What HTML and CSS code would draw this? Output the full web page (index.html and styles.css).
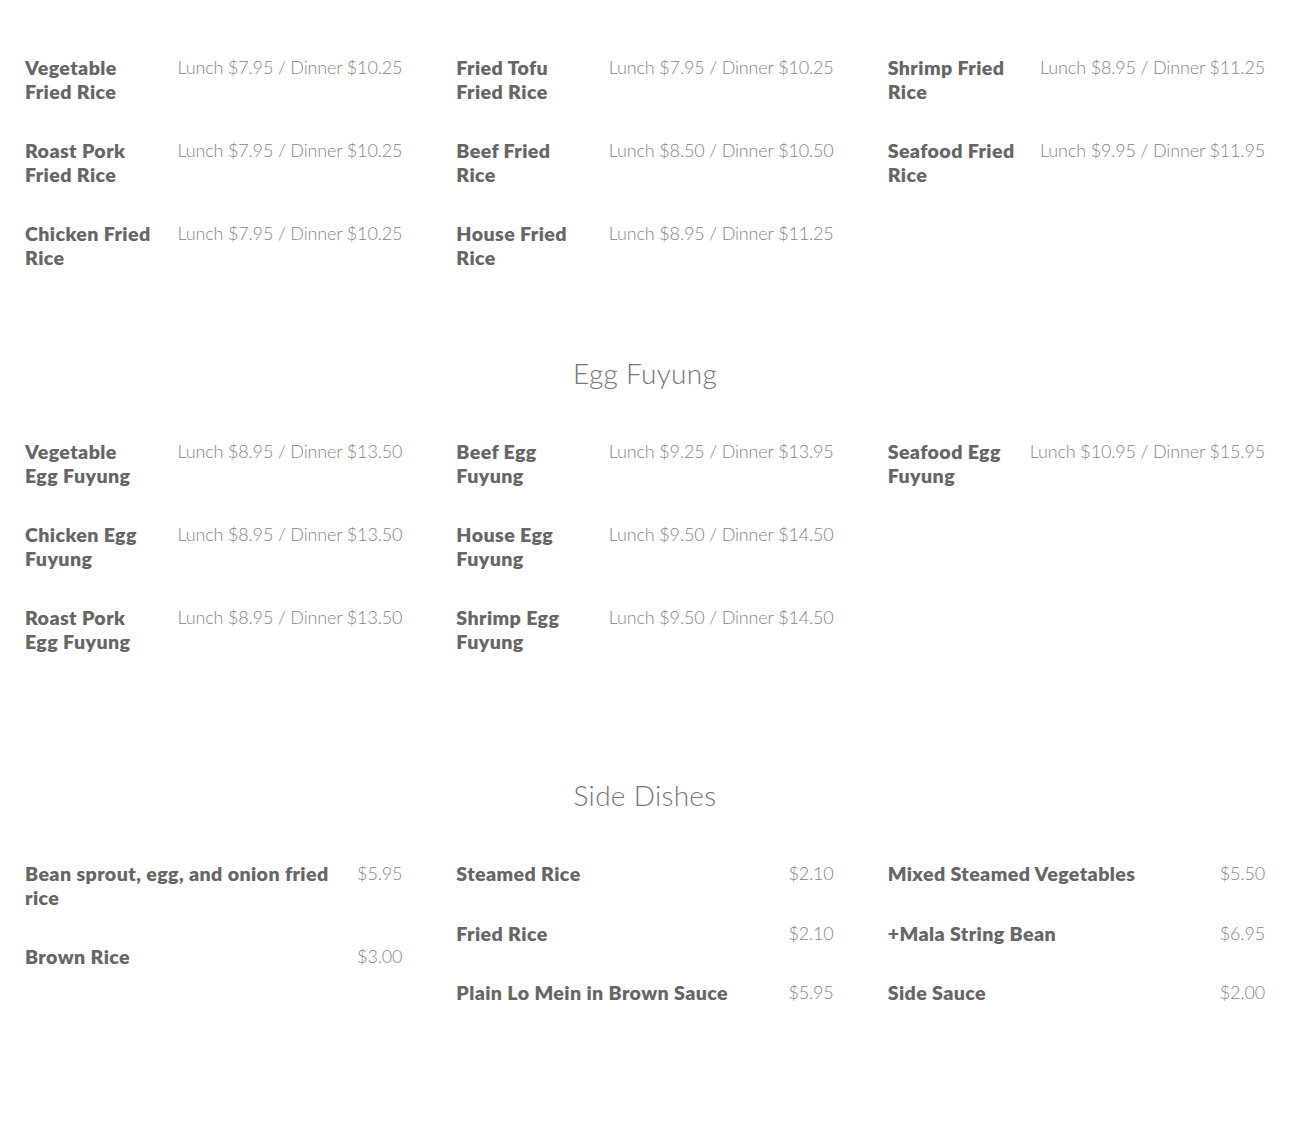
FILE: index.html
```html
<!DOCTYPE html>
<html lang="en">
<head>
<meta charset="utf-8">
<title>Menu</title>
<link rel="stylesheet" href="styles.css">
</head>
<body>
<main class="menu">
  <section class="section section--first">
    <h2 class="section-title">Fried Rice</h2>
    <div class="columns">
      <div class="column">
        <div class="item"><div class="item-name">Vegetable Fried Rice</div><div class="item-price">Lunch $7.95 / Dinner $10.25</div></div>
        <div class="item"><div class="item-name">Roast Pork Fried Rice</div><div class="item-price">Lunch $7.95 / Dinner $10.25</div></div>
        <div class="item"><div class="item-name">Chicken Fried Rice</div><div class="item-price">Lunch $7.95 / Dinner $10.25</div></div>
      </div>
      <div class="column">
        <div class="item"><div class="item-name">Fried Tofu Fried Rice</div><div class="item-price">Lunch $7.95 / Dinner $10.25</div></div>
        <div class="item"><div class="item-name">Beef Fried Rice</div><div class="item-price">Lunch $8.50 / Dinner $10.50</div></div>
        <div class="item"><div class="item-name">House Fried Rice</div><div class="item-price">Lunch $8.95 / Dinner $11.25</div></div>
      </div>
      <div class="column">
        <div class="item"><div class="item-name">Shrimp Fried Rice</div><div class="item-price">Lunch $8.95 / Dinner $11.25</div></div>
        <div class="item"><div class="item-name">Seafood Fried Rice</div><div class="item-price">Lunch $9.95 / Dinner $11.95</div></div>
      </div>
    </div>
  </section>

  <section class="section">
    <h2 class="section-title">Egg Fuyung</h2>
    <div class="columns">
      <div class="column">
        <div class="item"><div class="item-name">Vegetable Egg Fuyung</div><div class="item-price">Lunch $8.95 / Dinner $13.50</div></div>
        <div class="item"><div class="item-name">Chicken Egg Fuyung</div><div class="item-price">Lunch $8.95 / Dinner $13.50</div></div>
        <div class="item"><div class="item-name">Roast Pork Egg Fuyung</div><div class="item-price">Lunch $8.95 / Dinner $13.50</div></div>
      </div>
      <div class="column">
        <div class="item"><div class="item-name">Beef Egg Fuyung</div><div class="item-price">Lunch $9.25 / Dinner $13.95</div></div>
        <div class="item"><div class="item-name">House Egg Fuyung</div><div class="item-price">Lunch $9.50 / Dinner $14.50</div></div>
        <div class="item"><div class="item-name">Shrimp Egg Fuyung</div><div class="item-price">Lunch $9.50 / Dinner $14.50</div></div>
      </div>
      <div class="column">
        <div class="item"><div class="item-name">Seafood Egg Fuyung</div><div class="item-price">Lunch $10.95 / Dinner $15.95</div></div>
      </div>
    </div>
  </section>

  <section class="section">
    <h2 class="section-title">Side Dishes</h2>
    <div class="columns">
      <div class="column">
        <div class="item"><div class="item-name">Bean sprout, egg, and onion fried rice</div><div class="item-price">$5.95</div></div>
        <div class="item"><div class="item-name">Brown Rice</div><div class="item-price">$3.00</div></div>
      </div>
      <div class="column">
        <div class="item"><div class="item-name">Steamed Rice</div><div class="item-price">$2.10</div></div>
        <div class="item"><div class="item-name">Fried Rice</div><div class="item-price">$2.10</div></div>
        <div class="item"><div class="item-name">Plain Lo Mein in Brown Sauce</div><div class="item-price">$5.95</div></div>
      </div>
      <div class="column">
        <div class="item"><div class="item-name">Mixed Steamed Vegetables</div><div class="item-price">$5.50</div></div>
        <div class="item"><div class="item-name">+Mala String Bean</div><div class="item-price">$6.95</div></div>
        <div class="item"><div class="item-name">Side Sauce</div><div class="item-price">$2.00</div></div>
      </div>
    </div>
  </section>

  <section class="section">
    <h2 class="section-title">Extra Items</h2>
  </section>
</main>
</body>
</html>
```

FILE: styles.css
```css
html, body {
  margin: 0;
  padding: 0;
  background: #ffffff;
}

body {
  font-family: Lato, "Open Sans", "Liberation Sans", sans-serif;
  color: #666666;
}

.menu {
  padding: 0 25px;
  margin-top: -27px;
}

.section {
  padding-bottom: 90px;
}

.section--first {
  padding-bottom: 52px;
}

.section-title {
  margin: 0 0 51px;
  text-align: center;
  font-size: 28px;
  line-height: 32px;
  font-weight: 300;
  letter-spacing: 0.3px;
  color: #777777;
}

.columns {
  display: grid;
  grid-template-columns: repeat(3, 1fr);
  column-gap: 54px;
}

.column {
  display: flex;
  flex-direction: column;
}

.item {
  display: flex;
  justify-content: space-between;
  align-items: flex-start;
  gap: 25px;
  margin-bottom: 36px;
}

.item-name {
  flex: 1 1 auto;
  font-size: 19.6px;
  line-height: 23.5px;
  font-weight: 800;
  letter-spacing: 0.4px;
  color: #666666;
}

.item-price {
  flex: 0 0 auto;
  white-space: nowrap;
  font-size: 18px;
  line-height: 23.5px;
  font-weight: 300;
  letter-spacing: -0.15px;
  color: #858585;
}
```
